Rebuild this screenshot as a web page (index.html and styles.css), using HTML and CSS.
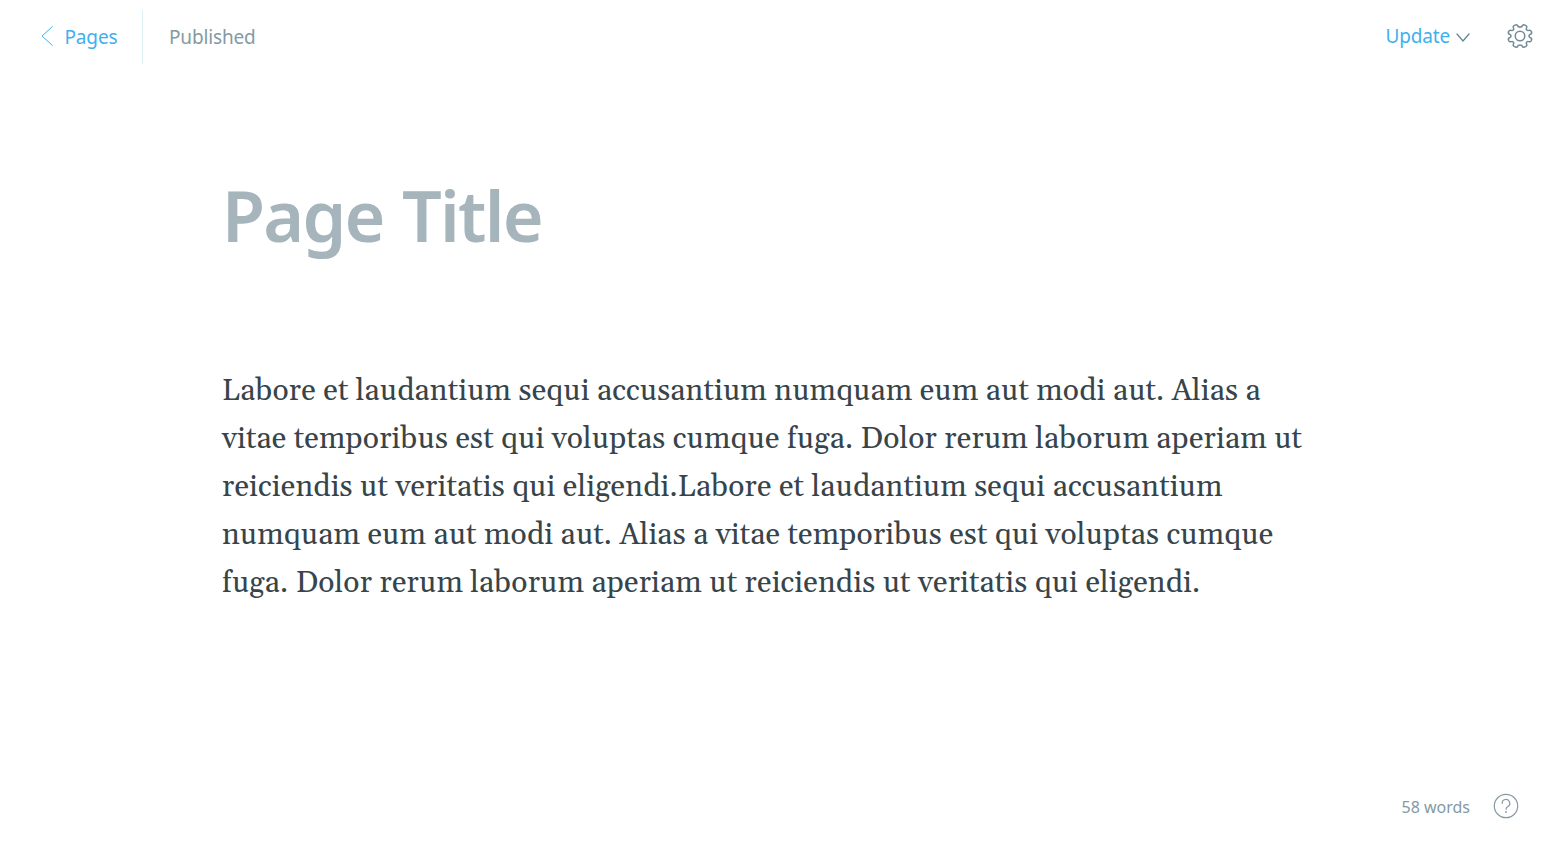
FILE: index.html
```html
<!DOCTYPE html>
<html lang="en">
<head>
<meta charset="utf-8">
<title>Page editor</title>
<link rel="stylesheet" href="styles.css">
</head>
<body>
<div class="editor">
  <header class="topbar">
    <a class="back"><svg class="chevron-left" viewBox="0 0 12 20"><path d="M11.300.7 1 10l10.300 9.300"/></svg><span class="back-label">Pages</span></a>
    <span class="status"><span class="status-label">Published</span></span>
    <button class="update"><span class="update-label">Update</span><svg class="chevron-down" viewBox="0 0 14 9"><path d="M1 1l6 7 6-7"/></svg></button>
    <button class="settings" aria-label="Settings"><svg class="gear" viewBox="-13.600 -13.600 27.200 27.200"><path d="M0-9.300Q1.900-9.300 2.400-10.600Q3-12.200 4.600-11.600L6.200-10.900Q7.500-10.200 6.900-8.600Q6.200-7.100 7.100-6.200Q7.900-5.300 9.400-5.900Q11-6.500 11.700-4.900L12.100-3.800Q12.500-2.500 11-1.900Q9.400-1.300 9.400 0Q9.400 1.300 11 1.900Q12.500 2.500 12.100 3.800L11.700 4.900Q11 6.500 9.400 5.900Q7.900 5.300 7.100 6.200Q6.200 7.100 6.900 8.600Q7.500 10.200 6.200 10.900L4.600 11.600Q3 12.200 2.400 10.600Q1.900 9.300 0 9.300Q-1.900 9.300-2.400 10.600Q-3 12.200-4.600 11.600L-6.200 10.900Q-7.500 10.200-6.900 8.600Q-6.200 7.100-7.100 6.200Q-7.900 5.300-9.400 5.900Q-11 6.500-11.700 4.900L-12.100 3.800Q-12.500 2.500-11 1.900Q-9.400 1.300-9.400 0Q-9.400-1.300-11-1.900Q-12.500-2.500-12.100-3.800L-11.700-4.900Q-11-6.500-9.400-5.900Q-7.900-5.300-7.100-6.200Q-6.200-7.100-6.900-8.600Q-7.500-10.200-6.200-10.900L-4.600-11.600Q-3-12.200-2.400-10.600Q-1.900-9.300 0-9.300Z"/><circle cx="0" cy="0" r="5"/></svg></button>
  </header>
  <main class="document">
    <h1 class="title"><span class="title-text">Page Title</span></h1>
    <p class="content">
      <span class="line">Labore et laudantium sequi accusantium numquam eum aut modi aut. Alias a</span>
      <span class="line">vitae temporibus est qui voluptas cumque fuga. Dolor rerum laborum aperiam ut</span>
      <span class="line">reiciendis ut veritatis qui eligendi.Labore et laudantium sequi accusantium</span>
      <span class="line">numquam eum aut modi aut. Alias a vitae temporibus est qui voluptas cumque</span>
      <span class="line">fuga. Dolor rerum laborum aperiam ut reiciendis ut veritatis qui eligendi.</span>
    </p>
  </main>
  <footer class="footer">
    <span class="word-count">58 words</span>
    <svg class="help" viewBox="0 0 26 26"><circle cx="13" cy="13" r="11.700"/><path d="M9.200 10.400a3.800 3.800 0 1 1 5.700 3.100c-1.300.8-1.900 1.300-1.900 2.800"/><circle class="dot" cx="13" cy="19" r=".9"/></svg>
  </footer>
</div>
</body>
</html>
```
FILE: styles.css
```css
* { box-sizing: border-box; }
body { margin: 0; background: #fff; font-family: "Noto Sans", "Open Sans", sans-serif; }
.editor { height: 854px; display: flex; flex-direction: column; overflow: hidden; }
svg { fill: none; stroke-linecap: round; stroke-linejoin: round; flex: none; }
button { border: 0; padding: 0; background: none; font: inherit; letter-spacing: inherit; display: flex; align-items: center; }
.topbar { height: 73px; display: flex; align-items: center; padding: 0 21px 0 41px; font-size: 19px; letter-spacing: -.15px; }
.back { width: 102px; height: 54px; display: flex; align-items: center; border-right: 1px solid #dfeff8; color: #3eb0ef; }
.chevron-left { width: 12px; height: 20px; margin: 0 11.500px 2px 0; stroke: #3eb0ef; }
.status { margin-left: 26px; color: #839aa4; }
.update { margin: 0 0 2px auto; color: #3eb0ef; }
.chevron-down { width: 14px; height: 9px; margin: 3px 0 0 6px; stroke: #5f8497; stroke-width: 1.2; }
.settings { margin: 0 0 2px 37px; }
.gear { width: 26px; height: 26px; stroke: #738a94; stroke-width: 1.6; }
.document { width: 1110px; margin-left: 222px; flex: 1; }
.title { margin: 90px 0 0; height: 104px; line-height: 104px; font-size: 70px; font-weight: 600; letter-spacing: -1.800px; word-spacing: 2px; color: #a6b4bb; white-space: nowrap; }
.content { margin: 100px 0 0; font: 30px/48px Gelasio, Georgia, "Liberation Serif", serif; letter-spacing: .15px; color: #37454b; }
.line { display: block; width: max-content; white-space: nowrap; }
.footer { height: 95px; display: flex; align-items: center; justify-content: flex-end; padding-right: 35px; font-size: 16px; letter-spacing: 0; color: #839aa4; }
.help { width: 26px; height: 26px; margin: 0 0 2px 23px; stroke: #839aa4; stroke-width: 1.2; }
.help .dot { fill: #839aa4; stroke: none; }
```
